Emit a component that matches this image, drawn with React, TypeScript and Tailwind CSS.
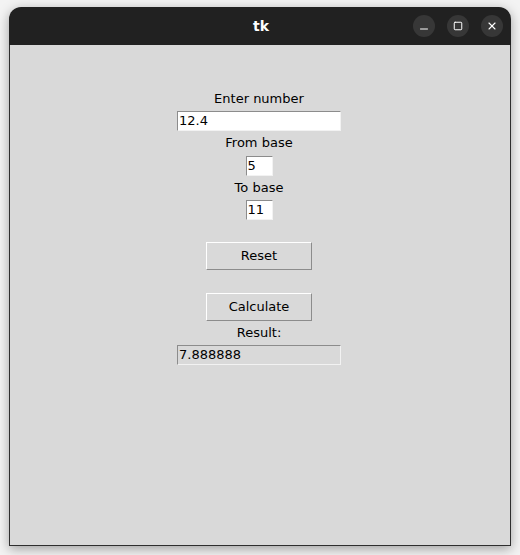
import { Minus, Square, X } from "lucide-react";

const font = "font-['DejaVu_Sans',sans-serif]";

function Label({ text, mt }: { text: string; mt: string }) {
  return <div className={`${mt} h-[20px] leading-[20px] text-[13px] text-black`}>{text}</div>;
}

function Entry({ value, w, mt, disabled }: { value: string; w: string; mt: string; disabled?: boolean }) {
  return (
    <div
      className={`${mt} ${w} h-[20px] border border-t-[#8c8c8c] border-l-[#8c8c8c] border-b-[#f2f2f2] border-r-[#f2f2f2] ${
        disabled ? "bg-[#d9d9d9]" : "bg-white"
      } pl-[1px] leading-[18px] text-[13px] text-black`}
    >
      {value}
    </div>
  );
}

function TkButton({ text, mt }: { text: string; mt: string }) {
  return (
    <div
      className={`${mt} w-[106px] h-[28px] border border-t-white border-l-white border-b-[#8c8c8c] border-r-[#8c8c8c] bg-[#d9d9d9] flex items-center justify-center text-[13px] text-black`}
    >
      {text}
    </div>
  );
}

export default function App() {
  return (
    <div className={`w-[520px] h-[555px] bg-[#f3f3f3] pt-[7px] pl-[9px] ${font}`}>
      <div className="w-[502px] h-[539px] rounded-t-[12px] overflow-hidden shadow-[0_3px_12px_rgba(0,0,0,0.35)] flex flex-col">
        {/* title bar */}
        <div className="h-[38px] bg-[#212121] flex items-center relative shrink-0">
          <div className="flex-1 text-center text-white font-bold text-[14px] pl-[2px]">tk</div>
          <div className="absolute right-[8px] top-[8px] flex gap-[12px]">
            <div className="w-[22px] h-[22px] rounded-full bg-[#373737] flex items-center justify-center">
              <Minus className="w-[12px] h-[12px] text-white translate-y-[3px]" strokeWidth={2} />
            </div>
            <div className="w-[22px] h-[22px] rounded-full bg-[#373737] flex items-center justify-center">
              <Square className="w-[10px] h-[10px] text-white" strokeWidth={2.4} />
            </div>
            <div className="w-[22px] h-[22px] rounded-full bg-[#373737] flex items-center justify-center">
              <X className="w-[12px] h-[12px] text-white" strokeWidth={2.2} />
            </div>
          </div>
        </div>

        {/* content */}
        <div className="flex-1 bg-[#d9d9d9] border border-t-0 border-[#2e2e2e] flex flex-col items-center pr-[2px]">
          <Label text="Enter number" mt="mt-[44px]" />
          <Entry value="12.4" w="w-[164px]" mt="mt-[2px]" />
          <Label text="From base" mt="mt-[2px]" />
          <Entry value="5" w="w-[27px]" mt="mt-[3px]" />
          <Label text="To base" mt="mt-[2px]" />
          <Entry value="11" w="w-[27px]" mt="mt-[2px]" />
          <TkButton text="Reset" mt="mt-[22px]" />
          <TkButton text="Calculate" mt="mt-[23px]" />
          <Label text="Result:" mt="mt-[2px]" />
          <Entry value="7.888888" w="w-[164px]" mt="mt-[2px]" disabled />
        </div>
      </div>
    </div>
  );
}
